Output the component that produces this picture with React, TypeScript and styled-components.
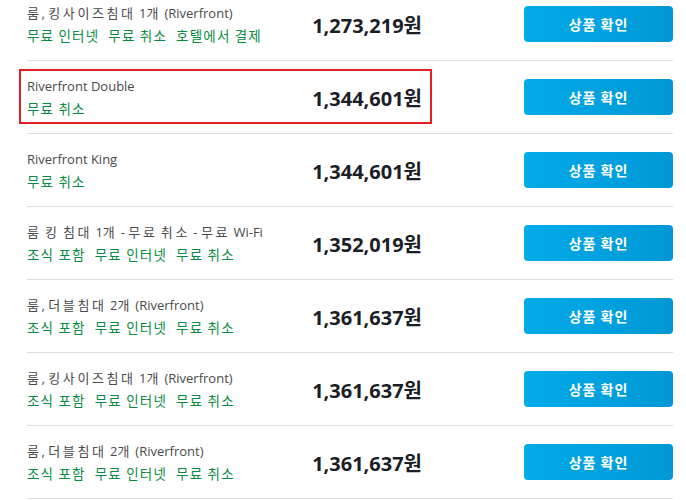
import React from "react";
import styled, { createGlobalStyle } from "styled-components";

const Global = createGlobalStyle`
  html, body { margin: 0; padding: 0; background: #fff; overflow: hidden; }
  body { font-family: "Open Sans", "Noto Sans CJK KR", sans-serif; }
`;

const List = styled.div`
  margin-top: -13px;
  padding: 0 13px 0 27px;
`;

const Row = styled.div`
  display: flex;
  align-items: center;
  padding: 14px 0;
  border-top: 1px solid #dcdde3;
`;

const Info = styled.div<{ $highlight?: boolean }>`
  position: relative;
  display: flex;
  align-items: center;
  width: 395px;
  &::after {
    content: "";
    display: ${(p) => (p.$highlight ? "block" : "none")};
    position: absolute;
    top: -6px;
    bottom: -5px;
    left: -8px;
    right: -10px;
    border: 2px solid #e41e26;
  }
`;

const TextCol = styled.div`
  flex: 1;
  display: flex;
  flex-direction: column;
`;

const Title = styled.div`
  font-family: "Open Sans", "Noto Sans CJK KR", sans-serif;
  font-size: 13px;
  line-height: 22px;
  height: 22px;
  color: #4a4a4a;
  white-space: nowrap;
`;

const Ko = styled.span`
  font-family: "Noto Sans CJK KR", sans-serif;
  letter-spacing: 2.6px;
`;

const Tags = styled.div`
  display: flex;
  gap: 9px;
  font-family: "Noto Sans CJK KR", sans-serif;
  font-size: 13.5px;
  letter-spacing: 1.2px;
  line-height: 22px;
  height: 22px;
  color: #0b8a45;
  white-space: nowrap;
`;

const Price = styled.div`
  font-family: "Open Sans", "Noto Sans CJK KR", sans-serif;
  font-weight: 700;
  font-size: 20px;
  color: #1b1e27;
  white-space: nowrap;
`;

const Button = styled.button`
  margin-left: auto;
  width: 149px;
  height: 36px;
  border: none;
  border-radius: 4px;
  background: linear-gradient(to right, #03abe9, #0098d5);
  color: #fff;
  font-family: "Noto Sans CJK KR", sans-serif;
  font-weight: 700;
  font-size: 14px;
  letter-spacing: 1px;
  cursor: pointer;
`;

type Item = { title: string; tags: string[]; price: string; highlight?: boolean };

const items: Item[] = [
  { title: "룸, 킹사이즈침대 1개 (Riverfront)", tags: ["무료 인터넷", "무료 취소", "호텔에서 결제"], price: "1,273,219원" },
  { title: "Riverfront Double", tags: ["무료 취소"], price: "1,344,601원", highlight: true },
  { title: "Riverfront King", tags: ["무료 취소"], price: "1,344,601원" },
  { title: "룸 킹 침대 1개 - 무료 취소 - 무료 Wi-Fi", tags: ["조식 포함", "무료 인터넷", "무료 취소"], price: "1,352,019원" },
  { title: "룸, 더블침대 2개 (Riverfront)", tags: ["조식 포함", "무료 인터넷", "무료 취소"], price: "1,361,637원" },
  { title: "룸, 킹사이즈침대 1개 (Riverfront)", tags: ["조식 포함", "무료 인터넷", "무료 취소"], price: "1,361,637원" },
  { title: "룸, 더블침대 2개 (Riverfront)", tags: ["조식 포함", "무료 인터넷", "무료 취소"], price: "1,361,637원" },
];

function renderTitle(s: string) {
  const parts = s.split(/([\uAC00-\uD7A3]+)/);
  return parts.map((p, i) =>
    /[\uAC00-\uD7A3]/.test(p) ? <Ko key={i}>{p}</Ko> : <React.Fragment key={i}>{p}</React.Fragment>
  );
}

export default function App() {
  return (
    <>
      <Global />
      <List>
        {items.map((it, i) => (
          <Row key={i}>
            <Info $highlight={it.highlight}>
              <TextCol>
                <Title>{renderTitle(it.title)}</Title>
                <Tags>
                  {it.tags.map((t) => (
                    <span key={t}>{t}</span>
                  ))}
                </Tags>
              </TextCol>
              <Price>{it.price}</Price>
            </Info>
            <Button>상품 확인</Button>
          </Row>
        ))}
        <Row />
      </List>
    </>
  );
}
